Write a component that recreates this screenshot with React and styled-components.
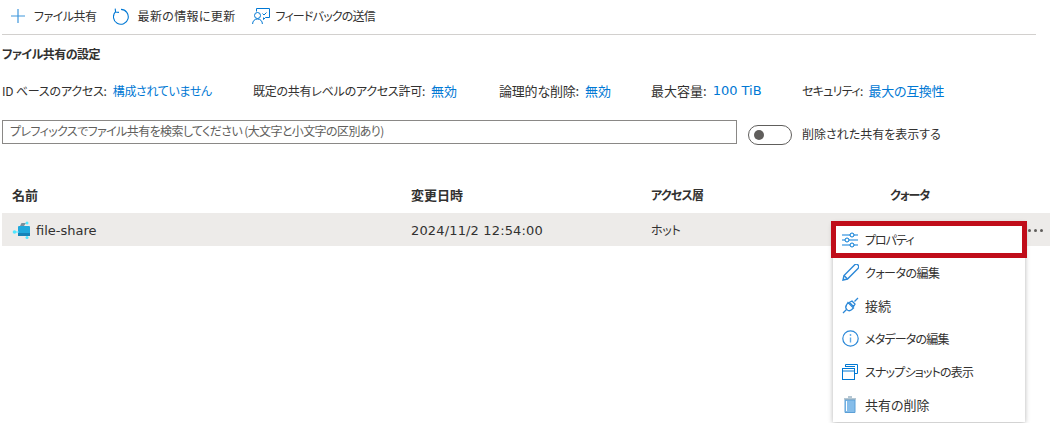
import React from "react";
import styled, { createGlobalStyle } from "styled-components";

const Global = createGlobalStyle`
  html, body {
    margin: 0;
    background: #fff;
    overflow: hidden;
  }
  body {
    font-family: "Noto Sans CJK JP", sans-serif;
    font-size: 12px;
    font-feature-settings: "palt";
    color: #323130;
  }
`;

const Page = styled.div`
  position: relative;
  width: 1050px;
  height: 423px;
  padding: 0 14px 0 2px;
  box-sizing: border-box;
`;

const Label = styled.span`
  font-size: ${(p) => p.$size || 12}px;
  letter-spacing: ${(p) => p.$ls || 0}px;
  line-height: 18px;
  white-space: nowrap;
`;

const Toolbar = styled.div`
  display: flex;
  align-items: center;
  height: 32px;
  padding: 0 0 2px 9px;
  border-bottom: 1px solid #d2d0ce;
`;

const ToolButton = styled.div`
  display: flex;
  align-items: center;
  gap: ${(p) => p.$iconGap}px;
  margin-right: 16px;
`;

const Heading = styled.div`
  font-weight: 700;
  margin-top: 10px;
  line-height: 18px;
  letter-spacing: -0.5px;
`;

const InfoRow = styled.div`
  display: flex;
  height: 18px;
  margin-top: 19px;
`;

const InfoItem = styled.div`
  display: flex;
  gap: 6px;
  width: ${(p) => p.$width}px;
`;

const InfoValue = styled(Label)`
  color: #0078d4;
`;

const Latin = styled.span`
  font-family: "DejaVu Sans", sans-serif;
  font-size: 13px;
  letter-spacing: ${(p) => p.$ls || 0}px;
  line-height: 18px;
`;

const RowText = styled(Latin)`
  margin-top: 2px;
`;

const SearchRow = styled.div`
  display: flex;
  align-items: flex-start;
  margin-top: 20px;
`;

const SearchBox = styled.div`
  width: 735px;
  height: 24px;
  box-sizing: border-box;
  border: 1px solid #8a8886;
  padding-left: 7px;
  line-height: 20px;
  letter-spacing: -0.6px;
  color: #605e5c;
`;

const Toggle = styled.div`
  width: 44px;
  height: 20px;
  box-sizing: border-box;
  margin: 5px 10px 0 11px;
  border: 1px solid #605e5c;
  border-radius: 10px;
  padding: 4px;
`;

const Knob = styled.div`
  width: 10px;
  height: 10px;
  margin-left: 1px;
  border-radius: 50%;
  background: #605e5c;
`;

const ToggleLabel = styled.span`
  margin-top: 5px;
  line-height: 18px;
`;

const TableHead = styled.div`
  display: grid;
  grid-template-columns: 399px 240px 239px 1fr;
  margin-top: 41px;
  padding-left: 10px;
  font-weight: 700;
  line-height: 18px;
`;

const TableRow = styled.div`
  display: grid;
  grid-template-columns: 399px 240px 239px 1fr;
  align-items: center;
  height: 33px;
  margin: 9px -14px 0 0;
  padding-left: 10px;
  background: #edebe9;
`;

const NameCell = styled.div`
  display: flex;
  align-items: center;
  gap: 5px;
`;

const More = styled.div`
  position: absolute;
  left: 1028px;
  top: 229px;
  display: flex;
  gap: 3px;
`;

const Dot = styled.i`
  width: 3px;
  height: 3px;
  border-radius: 50%;
  background: #605e5c;
`;

const Menu = styled.div`
  position: absolute;
  left: 833px;
  top: 223px;
  width: 192px;
  height: 199px;
  background: #fff;
  box-shadow: 0 1px 5px rgba(0, 0, 0, 0.3);
`;

const MenuItem = styled.div`
  display: flex;
  align-items: center;
  height: 33px;
  padding-left: 8px;
  gap: 6px;
`;

const MenuIcon = styled.span`
  display: flex;
  align-items: center;
  justify-content: center;
  width: 18px;
  height: 20px;
`;

const Highlight = styled.div`
  position: absolute;
  left: 831px;
  top: 221px;
  width: 196px;
  height: 37px;
  box-sizing: border-box;
  border: 5px solid #c00d1a;
`;

const Blue = "#0078d4";

const PlusIcon = () => (
  <svg width="14" height="14" viewBox="0 0 14 14">
    <path d="M7 0v14M0 7h14" stroke="#3f97dc" strokeWidth="1.2" />
  </svg>
);

const RefreshIcon = () => (
  <svg width="16" height="17" viewBox="0 0 16 17" fill="none">
    <path d="M8 1.4A7.4 7.4 0 1 1 2.6 3.6" stroke={Blue} strokeWidth="1.1" />
    <path d="M2.2 0.6L2.6 4 6 4.4" stroke={Blue} strokeWidth="1.1" />
  </svg>
);

const FeedbackIcon = () => (
  <svg width="18" height="16" viewBox="0 0 18 16" fill="none" stroke={Blue} strokeWidth="1">
    <path d="M4.5 3.5V0.5H17.5V9.5H13.5L11.5 11.5V9.5" />
    <circle cx="5.5" cy="7.5" r="3" />
    <path d="M0.6 16c0-3 2-5 4.9-5s4.9 2 4.9 5" />
    <path d="M10.5 5.5l1.5 1.5 2.5-2.5" />
  </svg>
);

const ShareIcon = () => (
  <svg width="19" height="18" viewBox="0 0 19 18">
    <rect x="6" y="5" width="12" height="10" rx="1" fill="#1fa8dc" />
    <rect x="6" y="12" width="12" height="3" fill="#1683b8" />
    <path d="M8 5l1.5-3H14l-2 3z" fill="#7a8f9c" />
    <circle cx="2.5" cy="11" r="1.8" fill="#50e6ff" />
    <path d="M3 11h4" stroke="#50e6ff" />
    <circle cx="15" cy="2" r="1.5" fill="#50e6ff" />
    <circle cx="15" cy="16.5" r="1.5" fill="#50e6ff" />
  </svg>
);

const SlidersIcon = () => (
  <svg width="16" height="16" viewBox="0 0 16 16" fill="none">
    <path d="M0 3h16M0 8h16M0 13h16" stroke="#5ea9e6" strokeWidth="1.4" />
    <circle cx="10" cy="3" r="2" fill="#fff" stroke={Blue} />
    <circle cx="5" cy="8" r="2" fill="#fff" stroke={Blue} />
    <circle cx="10" cy="13" r="2" fill="#fff" stroke={Blue} />
  </svg>
);

const PencilIcon = () => (
  <svg width="17" height="17" viewBox="0 0 17 17" fill="none" stroke="#2b88d8" strokeWidth="1.4">
    <path d="M1 16l1-4.5L12.5 1a2 2 0 0 1 3.5 3.5L5.5 15z" />
    <path d="M2 11.5L5.5 15" />
  </svg>
);

const PlugIcon = () => (
  <svg width="17" height="17" viewBox="0 0 17 17" fill="none" stroke="#2b88d8" strokeWidth="1.3">
    <path d="M1 16l3.5-3.5M12.5 4.5L16 1" />
    <path d="M6 5.5l5.5 5.5-2 1.8c-1.4 1.2-3.4 1-4.6-.2s-1.4-3.2-.4-4.6z" />
    <path d="M10 4l3 3-1.5 2.5L7.5 5.5z" />
  </svg>
);

const InfoIcon = () => (
  <svg width="17" height="17" viewBox="0 0 17 17" fill="none">
    <circle cx="8.5" cy="8.5" r="7.7" stroke="#2b88d8" strokeWidth="1.2" />
    <path d="M8.5 7.5v5" stroke="#5ea9e6" strokeWidth="1.4" />
    <circle cx="8.5" cy="5" r="0.9" fill="#5ea9e6" />
  </svg>
);

const SnapshotIcon = () => (
  <svg width="16" height="16" viewBox="0 0 16 16" fill="none" stroke={Blue}>
    <path d="M3.5 3V0.5h12v9H13" />
    <path d="M3.5 2.5h9.5" />
    <rect x="0.5" y="4.5" width="12" height="11" fill="#fff" />
    <path d="M0.5 7h12" />
  </svg>
);

const TrashIcon = () => (
  <svg width="14" height="17" viewBox="0 0 14 17">
    <path d="M2 4h10v12.5H2z" fill="#85bdea" stroke="#5b9fd6" />
    <path d="M1 3h12M5 1h4" stroke="#6c8fa8" strokeWidth="1.2" />
    <path d="M3.5 5v10" stroke="#fff" strokeWidth="1" />
  </svg>
);

const tools = [
  { icon: <PlusIcon />, label: "ファイル共有", iconGap: 9, ls: -0.5 },
  { icon: <RefreshIcon />, label: "最新の情報に更新", iconGap: 9, ls: 0.35 },
  { icon: <FeedbackIcon />, label: "フィードバックの送信", iconGap: 6, ls: -0.8 },
];

const info = [
  { label: "ID ベースのアクセス:", ls: -0.2, value: "構成されていません", valueLs: -0.35, width: 251 },
  { label: "既定の共有レベルのアクセス許可:", ls: -0.25, value: "無効", valueSize: 13, width: 246 },
  { label: "論理的な削除:", size: 13, ls: -0.2, value: "無効", valueSize: 13, width: 152 },
  { label: "最大容量:", size: 13, latin: "100 TiB", width: 151 },
  { label: "セキュリティ:", ls: -0.7, value: "最大の互換性", valueSize: 13, valueLs: -0.3, width: 160 },
];

const heads = [
  { label: "名前", size: 13 },
  { label: "変更日時", size: 13 },
  { label: "アクセス層", ls: -0.8 },
  { label: "クォータ", ls: -1 },
];

const menu = [
  { icon: <SlidersIcon />, label: "プロパティ", ls: -1 },
  { icon: <PencilIcon />, label: "クォータの編集", ls: -0.5 },
  { icon: <PlugIcon />, label: "接続", size: 13 },
  { icon: <InfoIcon />, label: "メタデータの編集", ls: -0.8 },
  { icon: <SnapshotIcon />, label: "スナップショットの表示", ls: -0.8 },
  { icon: <TrashIcon />, label: "共有の削除", size: 13 },
];

const App = () => (
  <Page>
    <Global />
    <Toolbar>
      {tools.map((t) => (
        <ToolButton key={t.label} $iconGap={t.iconGap}>
          {t.icon}
          <Label $ls={t.ls}>{t.label}</Label>
        </ToolButton>
      ))}
    </Toolbar>
    <Heading>ファイル共有の設定</Heading>
    <InfoRow>
      {info.map((i) => (
        <InfoItem key={i.label} $width={i.width}>
          <Label $size={i.size} $ls={i.ls}>{i.label}</Label>
          {i.latin ? (
            <InfoValue as={Latin}>{i.latin}</InfoValue>
          ) : (
            <InfoValue $size={i.valueSize} $ls={i.valueLs}>{i.value}</InfoValue>
          )}
        </InfoItem>
      ))}
    </InfoRow>
    <SearchRow>
      <SearchBox>プレフィックスでファイル共有を検索してください (大文字と小文字の区別あり)</SearchBox>
      <Toggle>
        <Knob />
      </Toggle>
      <ToggleLabel>削除された共有を表示する</ToggleLabel>
    </SearchRow>
    <TableHead>
      {heads.map((h) => (
        <Label key={h.label} $size={h.size} $ls={h.ls}>{h.label}</Label>
      ))}
    </TableHead>
    <TableRow>
      <NameCell>
        <ShareIcon />
        <RowText>file-share</RowText>
      </NameCell>
      <RowText $ls={0.15}>2024/11/2 12:54:00</RowText>
      <Label $ls={-0.3}>ホット</Label>
    </TableRow>
    <More>
      <Dot />
      <Dot />
      <Dot />
    </More>
    <Menu>
      {menu.map((m) => (
        <MenuItem key={m.label}>
          <MenuIcon>{m.icon}</MenuIcon>
          <Label $size={m.size} $ls={m.ls}>{m.label}</Label>
        </MenuItem>
      ))}
    </Menu>
    <Highlight />
  </Page>
);

export default App;
